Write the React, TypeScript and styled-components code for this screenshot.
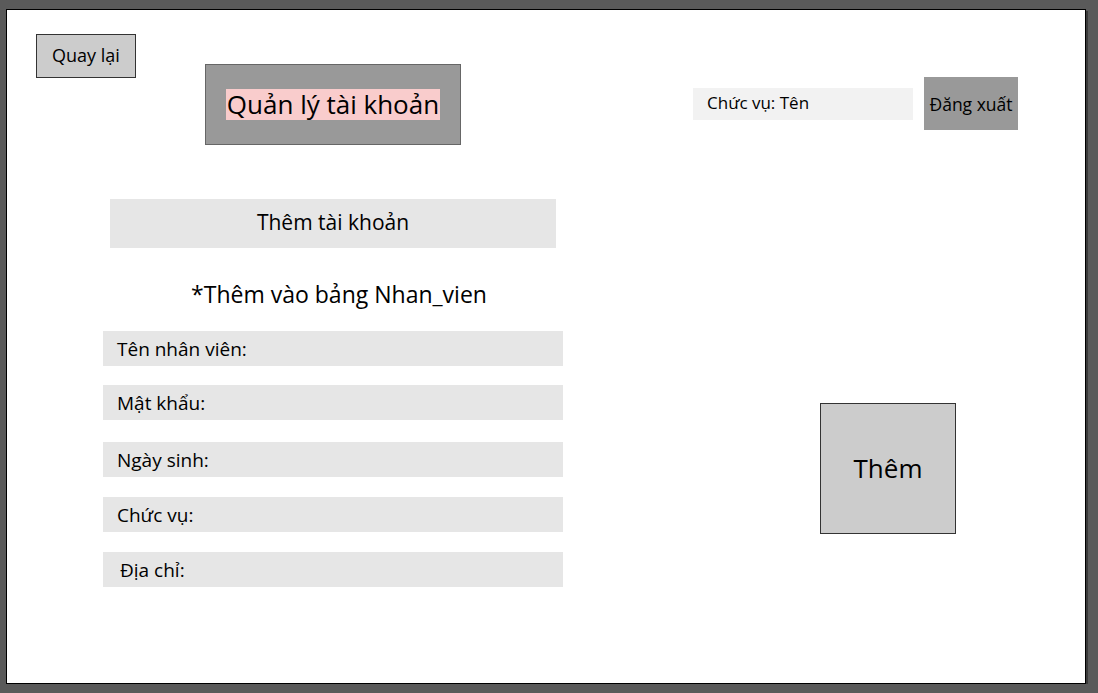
import styled, { createGlobalStyle } from "styled-components";

const GlobalStyle = createGlobalStyle`
  html, body {
    margin: 0;
    padding: 0;
    background: #5a5a5a;
  }
  body {
    font-family: "Open Sans", "Noto Sans", sans-serif;
    color: #000;
  }
  * {
    box-sizing: border-box;
  }
`;

const Artboard = styled.div`
  margin: 9px 0 0 6px;
  width: 1080px;
  height: 675px;
  background: #fff;
  border: 1px solid #000;
  box-shadow: 2px 2px 0 #3a3a3a;
  padding: 24px 0 0 29px;
  display: flex;
  flex-direction: column;
`;

const TopRow = styled.div`
  display: flex;
  align-items: flex-start;
`;

const BackButton = styled.button`
  width: 100px;
  height: 44px;
  background: #cccccc;
  border: 1px solid #333;
  font-family: inherit;
  font-size: 18px;
  color: #000;
  padding: 0 0 2px;
  cursor: pointer;
`;

const TitleBox = styled.div`
  margin: 30px 0 0 69px;
  width: 256px;
  height: 81px;
  background: #999999;
  border: 1px solid #666;
  display: flex;
  align-items: center;
  justify-content: center;
`;

const TitleText = styled.span`
  display: inline-block;
  background: #f9cccc;
  font-size: 26px;
  line-height: 31px;
  padding: 0 1px;
`;

const UserBar = styled.div`
  margin: 43px 0 0 232px;
  display: flex;
  align-items: center;
  gap: 11px;
`;

const InfoBox = styled.div`
  width: 220px;
  height: 32px;
  background: #f2f2f2;
  font-size: 17px;
  display: flex;
  align-items: center;
  padding: 0 0 3px 14px;
`;

const LogoutButton = styled.button`
  width: 94px;
  height: 53px;
  background: #999999;
  border: none;
  font-family: inherit;
  font-size: 17.5px;
  color: #000;
  padding: 0;
  cursor: pointer;
`;

const Body = styled.div`
  display: flex;
  align-items: flex-start;
`;

const FormColumn = styled.div`
  margin: 54px 0 0 67px;
  width: 460px;
  display: flex;
  flex-direction: column;
`;

const SectionBar = styled.div`
  margin-left: 7px;
  width: 446px;
  height: 49px;
  background: #e6e6e6;
  font-size: 21px;
  display: flex;
  align-items: center;
  justify-content: center;
  padding-bottom: 3px;
`;

const Note = styled.div`
  margin-top: 31px;
  height: 33px;
  font-size: 23px;
  line-height: 30px;
  text-align: center;
  padding-left: 12px;
`;

const Field = styled.div<{ $mt: number; $pl?: number }>`
  margin-top: ${(p) => p.$mt}px;
  height: 35px;
  background: #e6e6e6;
  font-size: 19px;
  display: flex;
  align-items: center;
  padding-left: ${(p) => p.$pl ?? 14}px;
`;

const AddButton = styled.button`
  margin: 258px 0 0 257px;
  width: 136px;
  height: 131px;
  background: #cccccc;
  border: 1px solid #333;
  font-family: inherit;
  font-size: 26px;
  color: #000;
  padding: 0 0 2px;
  cursor: pointer;
`;

const fields = [
  { label: "Tên nhân viên:", mt: 19 },
  { label: "Mật khẩu:", mt: 19 },
  { label: "Ngày sinh:", mt: 22 },
  { label: "Chức vụ:", mt: 20 },
  { label: "Địa chỉ:", mt: 20, pl: 17 },
];

export default function App() {
  return (
    <>
      <GlobalStyle />
      <Artboard>
        <TopRow>
          <BackButton>Quay lại</BackButton>
          <TitleBox>
            <TitleText>Quản lý tài khoản</TitleText>
          </TitleBox>
          <UserBar>
            <InfoBox>Chức vụ: Tên</InfoBox>
            <LogoutButton>Đăng xuất</LogoutButton>
          </UserBar>
        </TopRow>
        <Body>
          <FormColumn>
            <SectionBar>Thêm tài khoản</SectionBar>
            <Note>*Thêm vào bảng Nhan_vien</Note>
            {fields.map((f) => (
              <Field key={f.label} $mt={f.mt} $pl={f.pl}>
                {f.label}
              </Field>
            ))}
          </FormColumn>
          <AddButton>Thêm</AddButton>
        </Body>
      </Artboard>
    </>
  );
}
